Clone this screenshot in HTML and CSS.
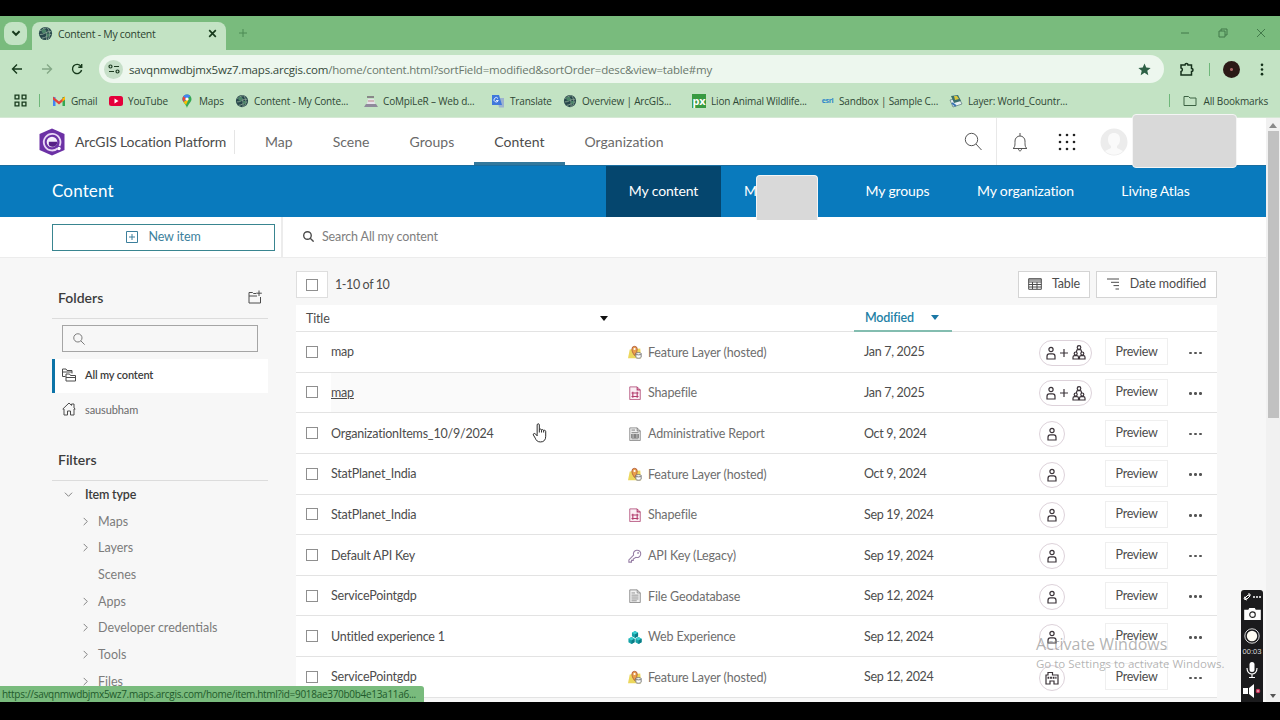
FILE: index.html
```html
<!DOCTYPE html>
<html lang="en">
<head>
  <meta charset="UTF-8">
  <meta name="viewport" content="width=device-width, initial-scale=1.0">
  <title>Content - My content</title>
  <link rel="stylesheet" href="styles.css">
</head>
<body>

  <!-- shared icons -->
  <svg class="defs" width="0" height="0">
    <symbol id="globe" viewBox="0 0 16 16">
      <circle cx="8" cy="8" r="7" fill="#27474b"/>
      <path d="M2 5c3 0 4-3 7-3M2 9c4 1 7-4 12-3M4 13c4 0 7-4 10-4M5 2c4 3 5 8 4 13M10 2c3 4 3 8 1 12" fill="none" stroke="#8ba695"/>
      <path d="M4 4l3-1 2 2-2 3-3-1zM9 8l3 0 0 3-2 1z" fill="#4b8468"/>
    </symbol>
    <symbol id="search" viewBox="0 0 16 16">
      <circle cx="6.5" cy="6.5" r="5.5"/><path d="M10.500 10.500l5 5"/>
    </symbol>
    <symbol id="chev" viewBox="0 0 10 10"><path d="M3 1l4 4-4 4"/></symbol>
    <symbol id="feature" viewBox="0 0 16 16">
      <path d="M2 5l12-1 1 11H0z" fill="#ecd75c"/>
      <path d="M7.500 12C5 8.500 4.500 6.500 4.500 4.500a3 3 0 0 1 6 0c0 2-.5 4-3 7.500z" fill="#e9a04d" stroke="#b05a3c"/>
      <circle cx="7.500" cy="4.500" r="1.200" fill="#fff"/>
      <path d="M9 10v4c0 1.500 6 1.500 6 0v-4" fill="#fff" stroke="#6a6a6a"/><ellipse cx="12" cy="10" rx="3" ry="1.300" fill="#fff" stroke="#6a6a6a"/>
    </symbol>
    <symbol id="shape" viewBox="0 0 16 16">
      <path d="M2 1h8.500L14 4.500V15.500H2z" fill="#fbeef4" stroke="#b5557f"/>
      <path d="M10.500 1v3.500H14M5.500 6.500v7M10.500 6.500v7M4 8h8M4 12h8" fill="none" stroke="#b23e6e" stroke-width="1.300"/>
    </symbol>
    <symbol id="report" viewBox="0 0 16 16">
      <path d="M2 1h8.500L14 4.500V15.500H2z" fill="#eee" stroke="#888"/>
      <path d="M10.500 1v3.500H14M4 3.500h4M4 6.500h8M4 13.500h8" fill="none" stroke="#777"/>
      <path d="M4.500 8v4.500M7 8v4.500M9 8v4.500M11.500 8v4.500" stroke="#666" stroke-width="1.500"/>
    </symbol>
    <symbol id="key" viewBox="0 0 16 16">
      <path d="M9 9.500a4.200 4.200 0 1 0-2.600-2.600L1 12.500v2.500h3v-2h2v-1.500z" fill="none" stroke="#957ca4" stroke-width="1.200"/><circle cx="11.500" cy="4.500" r="1" fill="#957ca4"/>
    </symbol>
    <symbol id="file" viewBox="0 0 16 16">
      <path d="M2 1h8.500L14 4.500V15.500H2z" fill="#f1f1f1" stroke="#858585"/>
      <path d="M10.500 1v3.500H14M4 4.500h4M4 7h8M4 9.200h8M4 11.400h8M4 13.500h6" fill="none" stroke="#8c8c8c"/>
    </symbol>
    <symbol id="cubes" viewBox="0 0 16 16">
      <path d="M8 1l3.500 2v4L8 9 4.500 7V3zM4 8l3.500 2v4L4 16 .5 14v-4zM12 8l3.500 2v4L12 16l-3.500-2v-4z" fill="#16a3a8"/>
      <path d="M8 1l3.500 2L8 5 4.500 3zM4 8l3.500 2L4 12 .5 10zM12 8l3.500 2-3.500 2-3.500-2z" fill="#3bcfd0"/>
      <path d="M8 5v4l3.500-2V3zM4 12v4l3.500-2v-4zM12 12v4l3.500-2v-4z" fill="#0b7c86"/>
    </symbol>
    <symbol id="person" viewBox="0 0 10 14">
      <circle cx="5" cy="3.500" r="2.100"/><path d="M1 13v-2.500c0-1.600.8-2.600 2.200-2.600h3.600C8.200 7.900 9 8.900 9 10.500v2.500z"/>
    </symbol>
    <symbol id="group" viewBox="0 0 14 15">
      <circle cx="7" cy="2.500" r="1.800"/><path d="M4.500 7V6.500c0-1.200.6-1.800 1.500-1.800h2c.9 0 1.500.6 1.500 1.800V7"/>
      <circle cx="3.700" cy="8.500" r="1.500"/><path d="M1 14v-1.700c0-1 .6-1.700 1.500-1.700H5c.9 0 1.500.7 1.500 1.700V14z"/>
      <circle cx="10.300" cy="8.500" r="1.500"/><path d="M7.500 14v-1.700c0-1 .6-1.700 1.500-1.700h2.500c.9 0 1.500.7 1.500 1.700V14z"/>
    </symbol>
    <symbol id="org" viewBox="0 0 14 14">
      <path d="M1 13V4h2V1.500h4.500V4H13v9H9v-3H5v3z"/><path d="M2.500 6.800h9" stroke-width="2" stroke-dasharray="1.800 .8"/>
    </symbol>
  </svg>

  <div class="browser">
    <div class="tabstrip">
      <div class="tab-search"><svg viewBox="0 0 10 10"><path d="M2 3.500l3 3 3-3"/></svg></div>
      <div class="tab">
        <svg class="favicon"><use href="#globe"/></svg>
        <span>Content - My content</span>
        <svg class="close" viewBox="0 0 10 10"><path d="M2 2l6 6M8 2l-6 6"/></svg>
      </div>
      <svg class="new-tab" viewBox="0 0 10 10"><path d="M5 1v8M1 5h8"/></svg>
      <div class="window-buttons">
        <svg viewBox="0 0 10 10"><path d="M1 5h8"/></svg>
        <svg viewBox="0 0 10 10"><path d="M1 3h6v6H1zM3 3V1h6v6H7"/></svg>
        <svg viewBox="0 0 10 10"><path d="M1 1l8 8M9 1L1 9"/></svg>
      </div>
    </div>

    <div class="toolbar">
      <svg class="nav-icon" viewBox="0 0 12 12"><path d="M11 6H1.500M6 1.500L1.500 6 6 10.500"/></svg>
      <svg class="nav-icon off" viewBox="0 0 12 12"><path d="M1 6h9.500M6 1.500L10.500 6 6 10.500"/></svg>
      <svg class="nav-icon" viewBox="0 0 12 12"><path d="M10 3.500A4.600 4.600 0 1 0 10.600 7M10.700 1v3.300H7.300"/></svg>
      <div class="omnibox">
        <div class="site-info"><svg viewBox="0 0 12 12"><circle cx="2.500" cy="3.500" r="1.500"/><path d="M6 3.500h5M1 8.500h5"/><circle cx="9.500" cy="8.500" r="1.500"/></svg></div>
        <div class="url"><b>savqnmwdbjmx5wz7.maps.arcgis.com</b>/home/content.html?sortField=modified&amp;sortOrder=desc&amp;view=table#my</div>
        <svg class="star" viewBox="0 0 14 14"><path d="M7 .5l1.900 4.400 4.700.4-3.600 3.100 1.100 4.700L7 10.600l-4.100 2.500L4 8.400.4 5.300l4.700-.4z"/></svg>
      </div>
      <div class="toolbar-right">
        <svg class="ext" viewBox="0 0 14 14"><path d="M1 3h4a1.500 1.500 0 0 1 3 0h3.500v3.500a1.500 1.500 0 0 1 0 3V13H1V9.500a1.800 1.800 0 0 0 0-3.500z"/></svg>
        <i class="sep"></i>
        <span class="profile"></span>
        <svg class="kebab" viewBox="0 0 4 14"><circle cx="2" cy="2" r="1.400"/><circle cx="2" cy="7" r="1.400"/><circle cx="2" cy="12" r="1.400"/></svg>
      </div>
    </div>

    <div class="bookmarks">
      <svg class="apps" viewBox="0 0 12 12"><path d="M1 1h3.500v3.500H1zM7.500 1H11v3.500H7.500zM1 7.500h3.500V11H1zM7.500 7.500H11V11H7.500z"/></svg>
      <i class="sep"></i>
      <div class="bookmark-list">
        <span class="gmail"><svg viewBox="0 0 14 14"><path d="M1 12V3h2.500v9z" fill="#4285f4"/><path d="M10.500 12V3H13v9z" fill="#34a853"/><path d="M1 2.500L7 7.500l6-5v3L7 10.500 1 5.500z" fill="#e2423a"/><path d="M10.500 4.500L13 2.500v3l-2.500 2z" fill="#fbbc04"/></svg>Gmail</span>
        <span><svg viewBox="0 0 14 14"><rect y="2" width="14" height="10" rx="2.500" fill="#e4003a"/><path d="M5.500 4.500v5L9.500 7z" fill="#fff"/></svg>YouTube</span>
        <span class="gmaps"><svg viewBox="0 0 14 14"><path d="M7 14C6 10 2.500 8.500 2.500 5A4.500 4.500 0 0 1 7 .5C9.500.5 11.500 2.500 11.500 5 11.500 8.500 8 10 7 14z" fill="#34a853"/><path d="M2.500 5A4.500 4.500 0 0 1 7 .5c1.500 0 2.500.5 3.300 1.500L3.500 8c-.6-1-1-2-1-3z" fill="#4285f4"/><path d="M3.500 2.200L6 4.500 3.500 8C2 5.500 2.300 4 3.500 2.200z" fill="#ea4335"/><path d="M3.500 8L9 4.500 6 11C5 9.500 4 9 3.500 8z" fill="#fbbc04"/><circle cx="7" cy="5" r="1.600" fill="#fff"/></svg>Maps</span>
        <span><svg><use href="#globe"/></svg>Content - My Conte...</span>
        <span><svg viewBox="0 0 14 14"><path d="M3 2h7v2H3z" fill="#888"/><path d="M4 5h6l1 5H3z" fill="#e6e2ea"/><path d="M0 13l2-3h10l2 3z" fill="#8f8a9b"/><path d="M4 7h6" stroke="#b88" /></svg>CoMpiLeR – Web d...</span>
        <span><svg viewBox="0 0 14 14"><path d="M6 4h7v9.500H8z" fill="#9db3cf"/><path d="M1 1h7l3 10H1z" fill="#3f78dc"/><path d="M7 4.500a2.200 2.200 0 1 0 .3 2H5" fill="none" stroke="#dfeaff"/></svg>Translate</span>
        <span><svg><use href="#globe"/></svg>Overview | ArcGIS...</span>
        <span class="px"><em>px</em>Lion Animal Wildlife...</span>
        <span><em class="esri">esri</em>Sandbox | Sample C...</span>
        <span><svg viewBox="0 0 14 14"><path d="M1 6l9-2 3 6-9 3z" fill="#e8f0f2" stroke="#55747a" stroke-width=".7"/><path d="M2 2l7-1 3 6-7 2z" fill="#3a6f6d"/><path d="M5 2l3 0 2 3-4 1z" fill="#d9c63d"/><path d="M3 9l4 3" stroke="#3b77b5" stroke-width="2"/></svg>Layer: World_Countr...</span>
      </div>
      <i class="sep"></i>
      <div class="all-bookmarks"><svg viewBox="0 0 14 12"><path d="M1 1.500h4.500L7 3h6v7.500H1z"/></svg>All Bookmarks</div>
    </div>

    <div class="viewport">
      <div class="page">
        <header class="site-header">
          <svg class="logo" viewBox="0 0 26 28"><path d="M13 .5L25.500 6v16L13 27.500.5 22V6z" fill="#6c31a5"/><path d="M18.500 20.500a8.300 8.300 0 1 1 2-2.500" fill="none" stroke="#e9d8f6" stroke-width="1.800"/><circle cx="13" cy="14" r="5.300" fill="#f6effb"/><path d="M9.800 13.800h8.500c0 3-2 5-5 5-1.500 0-3-.7-3.500-2z" fill="#572086"/><circle cx="20" cy="20.500" r="1.700" fill="#fff"/></svg>
          <div class="brand">ArcGIS Location Platform</div>
          <nav class="site-nav">
            <a>Map</a><a>Scene</a><a>Groups</a><a class="active">Content</a><a>Organization</a>
          </nav>
          <div class="header-tools">
            <div class="tool-search"><svg viewBox="0 0 18 20"><circle cx="7.500" cy="7.500" r="6.200"/><path d="M12 12l5.500 6"/></svg></div>
            <svg class="bell" viewBox="0 0 16 20"><path d="M1 16.500c2-1.500 2-3 2-7.500a5 5 0 0 1 10 0c0 4.500 0 6 2 7.500zM8 4V1M6.500 17c0 2.500 3 2.500 3 0"/></svg>
            <svg class="waffle" viewBox="0 0 18 18"><g fill="#222"><circle cx="2" cy="2" r="1.300"/><circle cx="9" cy="2" r="1.300"/><circle cx="16" cy="2" r="1.300"/><circle cx="2" cy="9" r="1.300"/><circle cx="9" cy="9" r="1.300"/><circle cx="16" cy="9" r="1.300"/><circle cx="2" cy="16" r="1.300"/><circle cx="9" cy="16" r="1.300"/><circle cx="16" cy="16" r="1.300"/></g></svg>
            <svg class="avatar" viewBox="0 0 28 28"><circle cx="14" cy="14" r="13.500" fill="#ececec"/><path d="M14 5c4 0 6 2.500 6 6.500 0 3-1 5-3 6.500v2l6 3c-5 5-13 5-18 0l6-3v-2c-2-1.500-3-3.500-3-6.500C8 7.500 10 5 14 5z" fill="#fafafa"/></svg>
          </div>
          <div class="mask mask-user"></div>
        </header>

        <div class="banner">
          <h1>Content</h1>
          <nav class="tabs">
            <a class="active t1">My content</a><a class="t2">M<span class="mask mask-tab"></span></a><a class="t3">My groups</a><a class="t4">My organization</a><a class="t5">Living Atlas</a>
          </nav>
        </div>

        <div class="actions">
          <div class="new-wrap">
            <button class="new-item"><svg viewBox="0 0 12 12"><path d="M.5.500h11v11H.5zM6 3v6M3 6h6"/></svg>New item</button>
          </div>
          <div class="search-all"><svg><use href="#search"/></svg>Search All my content</div>
        </div>

        <div class="main">
          <aside class="sidebar">
            <div class="side-head">
              <h2>Folders</h2>
              <svg viewBox="0 0 14 14"><path d="M8 3.500H5.500L4.500 2.500H1V13h11.500V7M1 6h8M11 .5v5.500M8.200 3.200h5.600"/></svg>
            </div>
            <div class="folder-search"><svg><use href="#search"/></svg></div>
            <div class="folder selected"><svg viewBox="0 0 14 14"><path d="M3.500 8.500H.5V1h3.500l1 1.500h5v3M.5 4h9.500M4 6h3.500l1 1.500h5V13H4zM4 9.500h9.500"/></svg>All my content</div>
            <div class="folder"><svg viewBox="0 0 14 14"><path d="M2 13V7H.8L7 1l2.500 2.400V2H12v4l1.200 1H12v6H8.500V9h-3v4z"/></svg>sausubham</div>
            <h2 class="filters">Filters</h2>
            <ul class="tree">
              <li class="root"><svg><use href="#chev"/></svg>Item type</li>
              <li><svg><use href="#chev"/></svg>Maps</li>
              <li><svg><use href="#chev"/></svg>Layers</li>
              <li class="leaf">Scenes</li>
              <li><svg><use href="#chev"/></svg>Apps</li>
              <li><svg><use href="#chev"/></svg>Developer credentials</li>
              <li><svg><use href="#chev"/></svg>Tools</li>
              <li><svg><use href="#chev"/></svg>Files</li>
            </ul>
          </aside>

          <section class="content">
            <div class="list-head">
              <span class="check-all"><i class="box"></i></span>
              <span class="count">1-10 of 10</span>
              <button class="view"><svg viewBox="0 0 14 12"><path d="M.7.700h12.600v10.600H.7zM.7 2h12.600M.7 4h12.600M.7 6.500h12.600M.7 9h12.600M4.500 4v7M9 4v7"/></svg>Table</button>
              <button class="sort"><svg viewBox="0 0 13 12"><path d="M0 1h12M4 4.300h8M6.500 7.600H12M8.500 11H12"/></svg>Date modified</button>
            </div>

            <div class="table">
              <div class="thead">
                <span class="th-title">Title<i class="caret"></i></span>
                <span class="th-mod">Modified<i class="caret"></i></span>
              </div>
              <div class="row">
                <i class="box"></i><span class="title">map</span>
                <span class="type"><svg><use href="#feature"/></svg>Feature Layer (hosted)</span>
                <span class="date">Jan 7, 2025</span>
                <span class="share wide"><svg class="p"><use href="#person"/></svg><svg class="plus" viewBox="0 0 8 8"><path d="M4 0v8M0 4h8"/></svg><svg class="g"><use href="#group"/></svg></span>
                <button class="preview">Preview</button><span class="dots"></span>
              </div>
              <div class="row hover">
                <i class="box"></i><span class="title">map</span>
                <span class="type"><svg><use href="#shape"/></svg>Shapefile</span>
                <span class="date">Jan 7, 2025</span>
                <span class="share wide"><svg class="p"><use href="#person"/></svg><svg class="plus" viewBox="0 0 8 8"><path d="M4 0v8M0 4h8"/></svg><svg class="g"><use href="#group"/></svg></span>
                <button class="preview">Preview</button><span class="dots"></span>
              </div>
              <div class="row">
                <i class="box"></i><span class="title">OrganizationItems_10/9/2024</span>
                <span class="type"><svg><use href="#report"/></svg>Administrative Report</span>
                <span class="date">Oct 9, 2024</span>
                <span class="share"><svg class="p"><use href="#person"/></svg></span>
                <button class="preview">Preview</button><span class="dots"></span>
              </div>
              <div class="row">
                <i class="box"></i><span class="title">StatPlanet_India</span>
                <span class="type"><svg><use href="#feature"/></svg>Feature Layer (hosted)</span>
                <span class="date">Oct 9, 2024</span>
                <span class="share"><svg class="p"><use href="#person"/></svg></span>
                <button class="preview">Preview</button><span class="dots"></span>
              </div>
              <div class="row">
                <i class="box"></i><span class="title">StatPlanet_India</span>
                <span class="type"><svg><use href="#shape"/></svg>Shapefile</span>
                <span class="date">Sep 19, 2024</span>
                <span class="share"><svg class="p"><use href="#person"/></svg></span>
                <button class="preview">Preview</button><span class="dots"></span>
              </div>
              <div class="row">
                <i class="box"></i><span class="title">Default API Key</span>
                <span class="type"><svg><use href="#key"/></svg>API Key (Legacy)</span>
                <span class="date">Sep 19, 2024</span>
                <span class="share"><svg class="p"><use href="#person"/></svg></span>
                <button class="preview">Preview</button><span class="dots"></span>
              </div>
              <div class="row">
                <i class="box"></i><span class="title">ServicePointgdp</span>
                <span class="type"><svg><use href="#file"/></svg>File Geodatabase</span>
                <span class="date">Sep 12, 2024</span>
                <span class="share"><svg class="p"><use href="#person"/></svg></span>
                <button class="preview">Preview</button><span class="dots"></span>
              </div>
              <div class="row">
                <i class="box"></i><span class="title">Untitled experience 1</span>
                <span class="type"><svg><use href="#cubes"/></svg>Web Experience</span>
                <span class="date">Sep 12, 2024</span>
                <span class="share"><svg class="p"><use href="#person"/></svg></span>
                <button class="preview">Preview</button><span class="dots"></span>
              </div>
              <div class="row">
                <i class="box"></i><span class="title">ServicePointgdp</span>
                <span class="type"><svg><use href="#feature"/></svg>Feature Layer (hosted)</span>
                <span class="date">Sep 12, 2024</span>
                <span class="share"><svg class="o"><use href="#org"/></svg></span>
                <button class="preview">Preview</button><span class="dots"></span>
              </div>
            </div>
          </section>
        </div>
      </div>
      <div class="scrollbar"><i class="up"></i><div class="thumb"></div><i class="down"></i></div>
    </div>

    <div class="status">https://savqnmwdbjmx5wz7.maps.arcgis.com/home/item.html?id=9018ae370b0b4e13a11a6...</div>
    <div class="watermark"><strong>Activate Windows</strong><span>Go to Settings to activate Windows.</span></div>
    <div class="recorder">
      <svg class="r-top" viewBox="0 0 20 8"><path d="M3 5l3-3 2 1-3 3zM3 3.500L2 6l3 1M6 1l2 0 0 2" fill="none" stroke="#fff"/><g fill="#fff"><circle cx="12" cy="4" r="1"/><circle cx="15" cy="4" r="1"/><circle cx="18" cy="4" r="1"/></g></svg>
      <svg class="r-cam" viewBox="0 0 18 13"><path d="M0 2h4.500l1-2h6l1 2H18v11H0z" fill="#fff"/><circle cx="9" cy="7.200" r="3" fill="#fff" stroke="#222" stroke-width="1.200"/></svg>
      <svg class="r-rec" viewBox="0 0 16 16"><circle cx="8" cy="8" r="7.200" fill="none" stroke="#ddd"/><circle cx="8" cy="8" r="5.200" fill="#fffdf3"/></svg>
      <span>00:03</span>
      <svg class="r-mic" viewBox="0 0 12 16"><rect x="3.500" y="0" width="5" height="10" rx="2.500" fill="#fff"/><path d="M1 6c0 8 10 8 10 0M6 12v3M3 15.500h6" fill="none" stroke="#fff" stroke-width="1.200"/></svg>
      <svg class="r-spk" viewBox="0 0 18 14"><path d="M0 4h5v6H0zM6 4l5-4v14l-5-4z" fill="#fff"/><circle cx="15" cy="7" r="2.300" fill="#c9385c"/><circle cx="15" cy="7" r=".8" fill="#fff"/></svg>
    </div>
    <svg class="cursor" viewBox="0 0 16 21"><path d="M5 12V2c0-1.600 2.300-1.600 2.300 0v5c.5-1 2.200-.8 2.300.4.500-.8 2-.6 2.200.5.700-.6 2.200-.2 2.200 1v5c0 4-2 6-5.500 6-3 0-4.500-1.500-5.500-4L1 12.500C.5 11 2.300 10.500 3.300 11.500L5 13.500z" fill="#fff" stroke="#222"/><path d="M7.300 7v3M9.600 7.500V10M11.800 8v2" stroke="#222"/></svg>
  </div>

</body>
</html>
```
FILE: styles.css
```css
* {
  box-sizing: border-box;
}

body {
  margin: 0;
  height: 720px;
  padding: 16px 0 18px;
  background-color: #000;
  overflow: hidden;
  font-family: Lato, sans-serif;
  color: #4c4c4c;
}

svg {
  display: block;
  flex: none;
  fill: none;
  stroke: #4c4c4c;
}

.defs { position: absolute; }

.browser {
  position: relative;
  height: 686px;
  display: flex;
  flex-direction: column;
  background-color: #c3e3c4;
  overflow: hidden;
}

/* browser chrome */
.tabstrip,
.toolbar,
.bookmarks,
.status,
.watermark {
  font-family: "Open Sans", sans-serif;
}

.tabstrip {
  height: 34px;
  flex: none;
  display: flex;
  align-items: center;
  background-color: #79bb7d;
}

.tab-search {
  width: 23px;
  height: 23px;
  margin: 0 5px 0 4px;
  border-radius: 8px;
  background-color: #c3e3c4;
  display: flex;
  align-items: center;
  justify-content: center;
}

.tab-search svg {
  width: 12px;
  height: 12px;
  stroke: #173a1c;
  stroke-width: 1.6;
}

.tab {
  width: 194px;
  height: 28px;
  align-self: flex-end;
  display: flex;
  align-items: center;
  padding: 0 8px 5px 6px;
  border-radius: 8px 8px 0 0;
  background-color: #c3e3c4;
  font-size: 10.5px;
  color: #2d4431;
  letter-spacing: -0.28px;
}

.tab span { flex: 1; }

.favicon {
  width: 15px;
  height: 15px;
  margin-right: 5px;
  stroke: none;
}

.close {
  width: 11px;
  height: 11px;
  stroke: #173a1c;
  stroke-width: 1.5;
}

.new-tab {
  width: 10px;
  height: 10px;
  margin-left: 12px;
  stroke: #4d8a54;
}

.window-buttons {
  margin-left: auto;
  display: flex;
  gap: 28px;
  padding-right: 14px;
}

.window-buttons svg {
  width: 10px;
  height: 10px;
  stroke: #42794a;
}

.toolbar {
  height: 38px;
  flex: none;
  display: flex;
  align-items: center;
  padding-left: 11px;
}

.nav-icon {
  width: 12px;
  height: 12px;
  margin-right: 18px;
  stroke: #173a1c;
  stroke-width: 1.4;
}

.nav-icon.off { stroke: #84a887; }

.omnibox {
  width: 1065px;
  height: 28px;
  margin-left: -2px;
  border-radius: 14px;
  background-color: #edf7ee;
  display: flex;
  align-items: center;
  padding: 0 13px 0 5px;
}

.site-info {
  width: 19px;
  height: 19px;
  border-radius: 50%;
  background-color: #c6dfc8;
  display: flex;
  align-items: center;
  justify-content: center;
  margin-right: 6px;
}

.site-info svg {
  width: 12px;
  height: 12px;
  stroke: #1d3b21;
  stroke-width: 1.2;
}

.url {
  flex: 1;
  font-size: 11.5px;
  letter-spacing: -0.19px;
  color: #6a786c;
}

.url b {
  font-weight: 400;
  color: #35493a;
}

.star {
  width: 13px;
  height: 13px;
  fill: #2d6045;
  stroke: none;
}

.toolbar-right {
  display: flex;
  align-items: center;
  margin-left: 16px;
}

.ext {
  width: 14px;
  height: 14px;
  stroke: #14301a;
  stroke-width: 1.5;
}

.sep {
  width: 1px;
  height: 13px;
  background-color: #6fb77a;
}

.toolbar-right .sep { margin: 0 13px 0 15px; }

.profile {
  width: 17px;
  height: 17px;
  border-radius: 50%;
  background: radial-gradient(circle, #a66 0 1px, #2b1a16 2px);
}

.kebab {
  width: 4px;
  height: 13px;
  margin-left: 20px;
  fill: #14301a;
  stroke: none;
}

.bookmarks {
  height: 30px;
  flex: none;
  display: flex;
  align-items: center;
  padding: 0 12px 4px 14px;
  font-size: 10px;
  letter-spacing: -0.17px;
  color: #2f4734;
  border-bottom: 1px solid #d5e8d5;
}

.apps {
  width: 13px;
  height: 13px;
  margin-right: 12px;
  stroke: #173a1c;
  stroke-width: 1.2;
}

.bookmark-list {
  flex: 1;
  display: grid;
  grid-template-columns: 57px 71px 55px 129px 127px 72px 129px 129px 128px 180px;
  padding-left: 12px;
  white-space: nowrap;
}

.bookmark-list span {
  display: flex;
  align-items: center;
}

.bookmark-list svg {
  width: 14px;
  height: 14px;
  margin-right: 5px;
  stroke: none;
}

.bookmark-list em {
  width: 14px;
  margin-right: 5px;
  font: bold 11px/14px "Open Sans", sans-serif;
  text-align: center;
  color: #fff;
  background-color: #389a41;
}

.bookmark-list em.esri {
  width: 13px;
  font-size: 7px;
  color: #2d86c9;
  background: none;
  letter-spacing: -0.4px;
}

.all-bookmarks {
  display: flex;
  align-items: center;
  gap: 7px;
  margin-left: 13px;
  white-space: nowrap;
}

.all-bookmarks svg {
  width: 14px;
  height: 12px;
  stroke: #3c6243;
}

/* page */
.viewport {
  flex: 1;
  min-height: 0;
  display: flex;
}

.page {
  width: 1266px;
  display: flex;
  flex-direction: column;
  background-color: #f7f7f7;
}

.site-header {
  position: relative;
  height: 47px;
  flex: none;
  display: flex;
  align-items: center;
  padding-left: 39px;
  background-color: #fff;
}

.logo {
  width: 26px;
  height: 28px;
  margin-right: 10px;
  stroke: none;
}

.brand {
  width: 160px;
  height: 24px;
  line-height: 23px;
  font-size: 14px;
  letter-spacing: -0.15px;
  white-space: nowrap;
  border-right: 1px solid #e5e5e5;
}

.site-nav {
  display: flex;
  align-self: stretch;
  padding-left: 10px;
  font-size: 14px;
  letter-spacing: 0.03px;
  color: #6a6a6a;
}

.site-nav a {
  display: flex;
  align-items: center;
  padding: 0 20px 1px;
}

.site-nav .active {
  color: #4c4c4c;
  box-shadow: inset 0 -3px #33789c;
}

.header-tools {
  align-self: stretch;
  display: flex;
  align-items: center;
  margin-left: auto;
  padding-right: 139px;
}

.header-tools svg { stroke: #555; }

.tool-search {
  align-self: stretch;
  width: 33px;
  margin-right: 15px;
  display: flex;
  align-items: center;
  border-right: 1px solid #e8e8e8;
}

.tool-search svg {
  width: 18px;
  height: 20px;
}

.bell {
  width: 16px;
  height: 20px;
  margin-right: 30px;
}

.header-tools .waffle {
  width: 18px;
  height: 18px;
  margin-right: 24px;
  stroke: none;
}

.header-tools .avatar {
  width: 28px;
  height: 28px;
  margin-right: -1px;
  stroke: none;
}

.mask {
  position: absolute;
  z-index: 2;
  background-color: #d9d9d9;
  border: 1px solid #f5f5f5;
  border-radius: 4px;
}

.mask-user {
  left: 1132px;
  top: -4px;
  width: 105px;
  height: 54px;
}

.mask-tab {
  left: 36px;
  top: 9px;
  width: 62px;
  height: 45px;
  border-bottom: none;
  border-radius: 4px 4px 0 0;
}

.banner {
  height: 52px;
  flex: none;
  display: flex;
  align-items: center;
  justify-content: space-between;
  padding-left: 52px;
  color: #fff;
  background-color: #097abd;
  border-top: 1px solid #1a6d9f;
}

.banner h1 {
  margin: 0;
  padding-bottom: 3px;
  font-size: 17px;
  font-weight: 400;
  letter-spacing: 0.15px;
}

.tabs {
  display: flex;
  align-self: stretch;
  width: 660px;
  font-size: 14px;
  letter-spacing: -0.12px;
  white-space: nowrap;
}

.tabs a {
  position: relative;
  display: flex;
  align-items: center;
  justify-content: center;
  padding-bottom: 3px;
}

.tabs .active { background-color: #05466e; }
.t1 { width: 115px; }
.tabs .t2 { width: 120px; padding-left: 23px; justify-content: flex-start; }
.tabs .t2 .mask-tab { left: 35px; }
.t3 { width: 113px; }
.t4 { width: 143px; }
.t5 { width: 117px; }

.actions {
  height: 41px;
  flex: none;
  display: flex;
  background-color: #fff;
  border-bottom: 1px solid #ececec;
}

.new-wrap {
  width: 283px;
  padding: 7px 7px 6px 52px;
  border-right: 2px solid #ececec;
}

.new-item {
  width: 223px;
  height: 27px;
  display: flex;
  align-items: center;
  justify-content: center;
  gap: 10px;
  padding-bottom: 3px;
  border: 1px solid #398590;
  background-color: #fff;
  font: 12.5px Lato, sans-serif;
  letter-spacing: -0.1px;
  color: #3c7f9c;
}

.new-item svg {
  width: 12px;
  height: 12px;
  stroke: #3c7f9c;
}

.search-all {
  display: flex;
  align-items: center;
  gap: 8px;
  padding-left: 20px;
  font-size: 12.5px;
  letter-spacing: -0.14px;
  color: #7e7e7e;
  padding-bottom: 2px;
}

.search-all svg {
  width: 11px;
  height: 11px;
  stroke-width: 2;
}

.main {
  flex: 1;
  min-height: 0;
  display: flex;
  gap: 28px;
  padding-left: 52px;
  overflow: hidden;
}

.sidebar { width: 216px; }

.sidebar h2 {
  margin: 0;
  font-size: 14px;
  font-weight: 600;
  color: #3c3c3c;
}

.side-head {
  height: 61px;
  display: flex;
  align-items: center;
  justify-content: space-between;
  padding: 18px 6px 0;
  border-bottom: 1px solid #dcdcdc;
}

.side-head svg {
  width: 14px;
  height: 14px;
}

.folder-search {
  height: 27px;
  margin: 6px 10px 7px;
  padding: 7px 10px;
  border: 1px solid #a5a5a5;
}

.folder-search svg {
  width: 12px;
  height: 12px;
  stroke: #777;
  stroke-width: 1.3;
}

.folder {
  height: 34px;
  display: flex;
  align-items: center;
  gap: 9px;
  padding: 0 0 2px 10px;
  font-size: 11px;
  letter-spacing: -0.1px;
  color: #6a6a6a;
}

.folder svg {
  width: 14px;
  height: 14px;
}

.folder.selected {
  padding: 0 0 3px 7px;
  border-left: 3px solid #0d74a8;
  background-color: #fff;
  font-weight: 600;
  letter-spacing: -0.15px;
  color: #3c3c3c;
}

.sidebar .filters {
  height: 54px;
  padding: 24px 6px 0;
  border-bottom: 1px solid #dcdcdc;
}

.tree {
  margin: 0;
  padding: 0;
  list-style: none;
  font-size: 12.5px;
  color: #7c7c7c;
}

.tree li {
  height: 26.7px;
  display: flex;
  align-items: center;
  padding-left: 29px;
}

.tree .leaf { padding-left: 46px; }

.tree svg {
  width: 9px;
  height: 9px;
  margin-right: 8px;
  stroke: #777;
}

.tree .root {
  padding-left: 12px;
  font-weight: 600;
  letter-spacing: -0.2px;
  color: #3c3c3c;
}

.tree .root svg {
  margin-right: 12px;
  transform: rotate(90deg);
}

.content { width: 921px; }

.list-head {
  height: 47px;
  display: flex;
  align-items: center;
  padding-top: 6px;
}

.list-head button {
  height: 27px;
  display: flex;
  align-items: center;
  justify-content: center;
  border: 1px solid #d4d4d4;
  background-color: #fff;
  font: 12.5px Lato, sans-serif;
  letter-spacing: -0.13px;
  color: #4c4c4c;
  padding: 0 0 2px;
}

.list-head .view {
  width: 72px;
  margin-left: auto;
  gap: 10px;
}

.list-head .sort {
  width: 121px;
  margin-left: 6px;
  gap: 10px;
}

.view svg {
  width: 14px;
  height: 12px;
}

.sort svg {
  width: 13px;
  height: 12px;
}

.check-all {
  width: 32px;
  height: 27px;
  display: flex;
  align-items: center;
  justify-content: center;
  border: 1px solid #dedede;
  background-color: #fff;
}

.count {
  margin-left: 7px;
  font-size: 12.5px;
  letter-spacing: -0.4px;
}

.box {
  width: 12px;
  height: 12px;
  border: 1px solid #8f8f8f;
  background-color: #fff;
}

.table {
  background-color: #fff;
  font-size: 12.5px;
  letter-spacing: -0.15px;
}

.thead {
  height: 27px;
  display: flex;
  justify-content: space-between;
  border-bottom: 1px solid #e3e3e3;
}

.thead span {
  display: flex;
  align-items: center;
  justify-content: space-between;
}

.th-title {
  width: 312px;
  padding-left: 10px;
}

.th-mod {
  width: 98px;
  height: 27px;
  margin-right: 265px;
  padding: 0 13px 0 11px;
  font-weight: 600;
  color: #227fa6;
  border-bottom: 2px solid #83bdb0;
}

.caret {
  border: 4px solid transparent;
  border-top: 5px solid #111;
  border-bottom: none;
}

.th-mod .caret { border-top-color: #1a77a5; }

.row {
  height: 40.65px;
  display: grid;
  grid-template-columns: 25px 297px 236px 175px 66px 84px 18px;
  align-items: center;
  padding-left: 10px;
  border-bottom: 1px solid #e3e3e3;
}

.title {
  align-self: stretch;
  display: flex;
  align-items: center;
  margin-right: 8px;
  letter-spacing: -0.2px;
}

.hover .title {
  background-color: #fafafa;
  text-decoration: underline;
}

.type {
  display: flex;
  align-items: center;
  gap: 6px;
  color: #6e6e6e;
  padding-top: 1px;
}

.type svg {
  width: 14px;
  height: 14px;
  stroke: none;
}

.date { letter-spacing: -0.3px; }

.share {
  width: 26px;
  height: 26px;
  display: flex;
  align-items: center;
  justify-content: center;
  gap: 4px;
  border: 1px solid #ddd2da;
  border-radius: 14px;
  margin-top: 2px;
}

.share.wide { width: 53px; }

.share svg {
  stroke: #3a3238;
  stroke-width: 1.2;
}

.share .p {
  width: 10px;
  height: 14px;
}

.share .plus {
  width: 8px;
  height: 8px;
}

.share .g {
  width: 14px;
  height: 15px;
}

.share .o {
  width: 14px;
  height: 14px;
}

.preview {
  width: 63px;
  height: 27px;
  padding: 0 0 1px;
  border: 1px solid #efefef;
  background-color: #fff;
  font: 12.5px Lato, sans-serif;
  letter-spacing: -0.3px;
  color: #4c4c4c;
}

.dots {
  width: 2.5px;
  height: 2.5px;
  margin: 2px 0 0 0;
  background-color: #555;
  border-radius: 50%;
  box-shadow: 5px 0 #555, 10px 0 #555;
}

.scrollbar {
  width: 14px;
  display: flex;
  flex-direction: column;
  align-items: center;
  background-color: #f1f1f1;
}

.scrollbar .up {
  margin: 5px 0 3px;
  border: 4px solid transparent;
  border-bottom: 5px solid #8a8a8a;
  border-top: none;
}

.thumb {
  width: 11px;
  height: 287px;
  background-color: #c1c1c1;
}

.scrollbar .down {
  margin: auto 0 4px;
  border: 3px solid transparent;
  border-top: 4px solid #555;
  border-bottom: none;
}

/* floating things */
.status {
  position: absolute;
  left: 0;
  bottom: 0;
  width: 424px;
  height: 16px;
  padding-left: 2px;
  line-height: 17px;
  font-size: 10px;
  letter-spacing: -0.3px;
  white-space: nowrap;
  color: #1f5a2b;
  background-color: #79bb7d;
  border-radius: 0 3px 0 0;
}

.watermark {
  position: absolute;
  left: 1036px;
  top: 617px;
  display: flex;
  flex-direction: column;
  color: rgba(130, 130, 130, 0.6);
  white-space: nowrap;
}

.watermark strong {
  font-size: 16px;
  line-height: 22px;
  font-weight: 400;
}

.watermark span {
  font-size: 11.5px;
  line-height: 17px;
}

.recorder {
  position: absolute;
  left: 1241px;
  top: 574px;
  width: 22px;
  height: 112px;
  display: flex;
  flex-direction: column;
  align-items: center;
  background-color: #1b1b1d;
  border-radius: 3px 3px 0 0;
  color: #ddd;
}

.recorder svg { stroke: none; }

.recorder span {
  font: 7.5px/9px "Liberation Sans", sans-serif;
  margin: 3px 0 6px;
}

.r-top { width: 20px; height: 8px; margin-top: 3px; }
.r-cam { width: 17px; height: 12px; margin: 7px 0 8px; }
.r-rec { width: 16px; height: 16px; }
.r-mic { width: 12px; height: 16px; margin-bottom: 6px; }
.r-spk { width: 18px; height: 14px; }

.cursor {
  position: absolute;
  left: 532px;
  top: 407px;
  width: 16px;
  height: 20px;
}
```
